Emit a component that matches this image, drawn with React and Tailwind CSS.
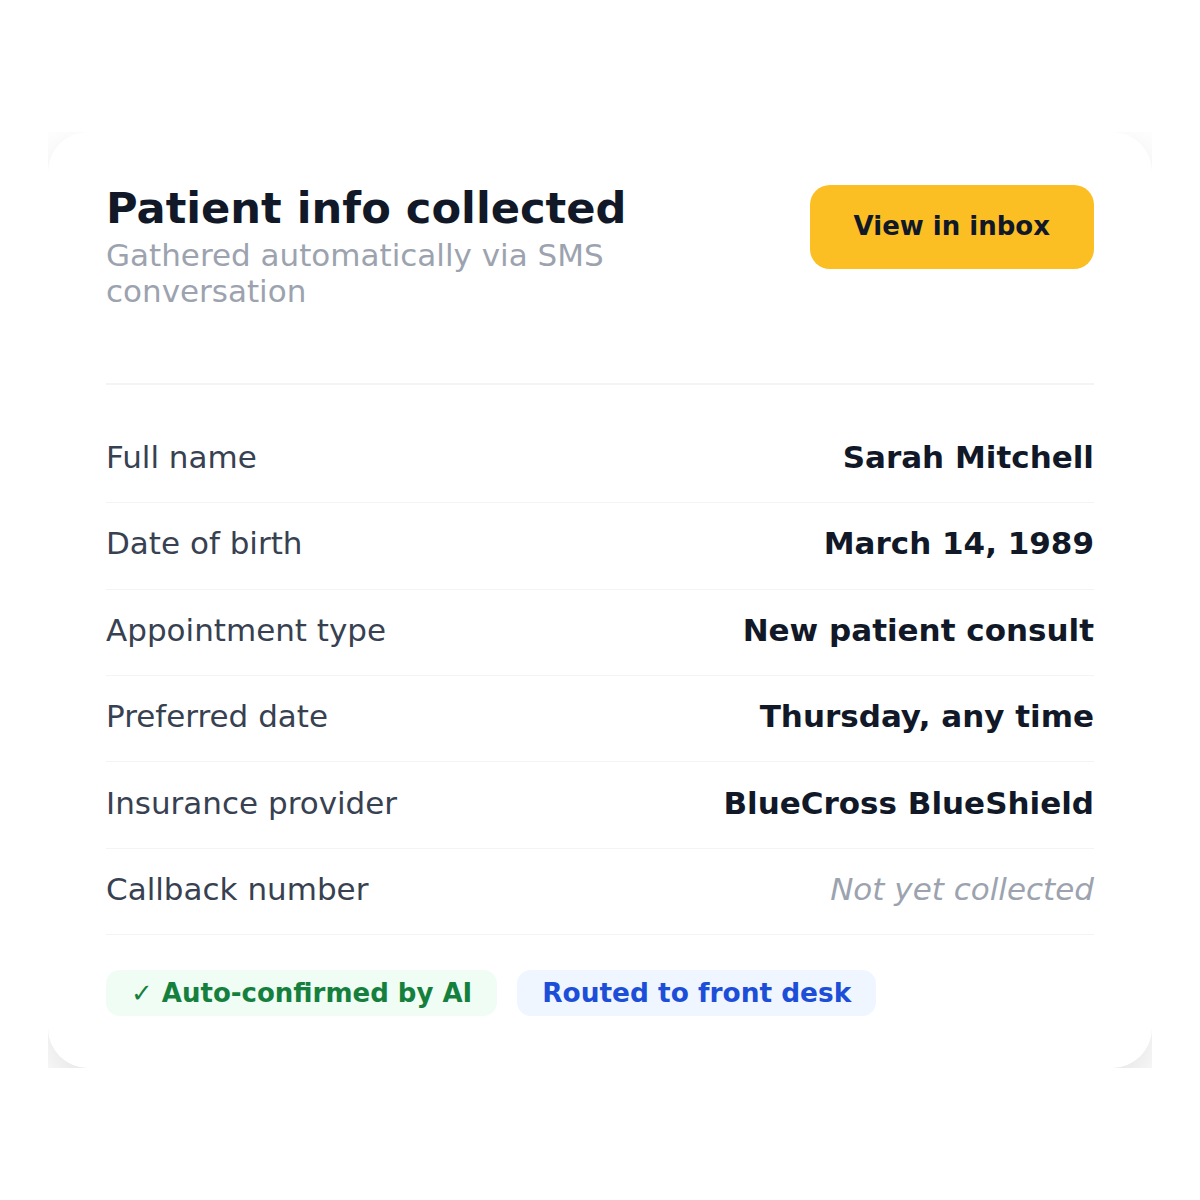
const FIELDS = [
  { label: 'Full name', value: 'Sarah Mitchell' },
  { label: 'Date of birth', value: 'March 14, 1989' },
  { label: 'Appointment type', value: 'New patient consult' },
  { label: 'Preferred date', value: 'Thursday, any time' },
  { label: 'Insurance provider', value: 'BlueCross BlueShield' },
  { label: 'Callback number', value: null },
]

function FieldRow({ label, value }) {
  return (
    <div className="flex items-center justify-between border-b border-[#f3f4f6] pt-[22.2px] pb-[26.2px] text-[31px] leading-[37px]">
      <span className="text-[#374151]">{label}</span>
      {value ? (
        <span className="font-bold text-[#111827]">{value}</span>
      ) : (
        <span className="italic text-[#9ca3af]">Not yet collected</span>
      )}
    </div>
  )
}

export default function App() {
  return (
    <div
      className="min-h-screen bg-white flex items-center justify-center px-[48px]"
      style={{ fontFamily: '"DejaVu Sans", "Noto Sans", sans-serif' }}
    >
      <div className="w-full overflow-hidden">
        <div className="bg-white rounded-[40px] shadow-[0_20px_50px_rgba(0,0,0,0.12)] px-[58px] pt-[51px] pb-[52px]">
          <div className="flex items-start justify-between border-b-2 border-[#f3f4f6] pb-[74px]">
            <div className="max-w-[540px]">
              <h1 className="text-[43.2px] leading-[50px] font-bold text-[#111827]">Patient info collected</h1>
              <p className="mt-[4px] text-[31px] leading-[36px] text-[#9ca3af]">
                Gathered automatically via SMS conversation
              </p>
            </div>
            <button className="mt-[2px] h-[84px] px-[44px] rounded-[20px] bg-[#fbbf24] text-[26px] font-bold text-[#111827]">
              View in inbox
            </button>
          </div>

          <div className="pt-[32px]">
            {FIELDS.map((f) => (
              <FieldRow key={f.label} label={f.label} value={f.value} />
            ))}
          </div>

          <div className="flex gap-[20px] mt-[35px]">
            <span className="inline-flex items-center h-[46px] px-[25px] rounded-[14px] bg-[#f0fdf4] text-[#15803d] text-[26px] font-bold">
              ✓ Auto-confirmed by AI
            </span>
            <span className="inline-flex items-center h-[46px] px-[25px] rounded-[14px] bg-[#eff6ff] text-[#1d4ed8] text-[26.4px] font-bold">
              Routed to front desk
            </span>
          </div>
        </div>
      </div>
    </div>
  )
}
